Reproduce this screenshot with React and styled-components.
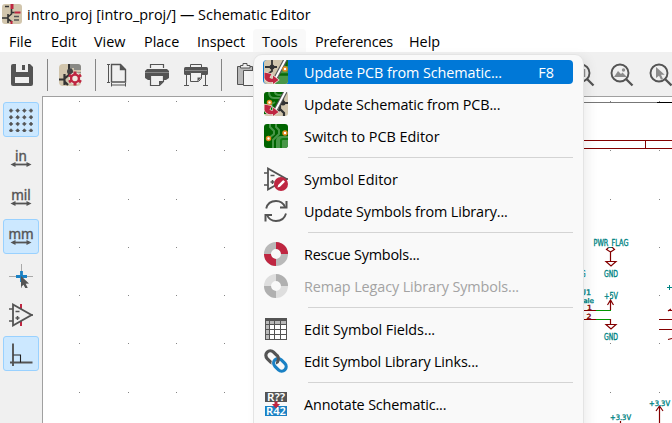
import React from 'react';
import styled, { createGlobalStyle } from 'styled-components';

const Global = createGlobalStyle`
  html, body { margin: 0; padding: 0; background: #fff; overflow: hidden; }
  * { box-sizing: border-box; }
  svg { display: block; flex: none; }
`;

const Window = styled.div`
  position: relative;
  width: 672px;
  height: 423px;
  overflow: hidden;
  display: flex;
  flex-direction: column;
  background: #fff;
  color: #000;
  font: 14.4px "Open Sans", "Noto Sans", sans-serif;
`;
const TitleBar = styled.header`
  height: 28px;
  display: flex;
  align-items: center;
  padding: 0 0 0 2px;
  gap: 5px;
  white-space: nowrap;
`;
const Title = styled.span`
  line-height: 28px;
  padding-top: 1px;
`;
const MenuBar = styled.nav`
  height: 24px;
  display: flex;
`;
const MenuName = styled.div`
  width: ${p => p.$w}px;
  height: 24px;
  line-height: 27px;
  padding-left: 9px;
  white-space: nowrap;
  letter-spacing: ${p => p.$ls || 0}px;
`;
const OpenMenuName = styled(MenuName)`
  margin-top: 1px;
  line-height: 25px;
  border-radius: 4px 4px 0 0;
  background: #f9f9f9;
`;
const Toolbar = styled.div`
  height: 44px;
  background: #f0f0f0;
  display: flex;
  align-items: center;
  padding: 2px 0 0 10px;
`;
const Tool = styled.div`
  width: 24px;
  height: 24px;
  flex: none;
  margin-right: ${p => p.$gap}px;
`;
const Divider = styled.div`
  width: 1px;
  height: 32px;
  flex: none;
  background: #858585;
  margin-right: ${p => p.$gap}px;
`;
const Body = styled.div`
  flex: 1;
  min-height: 0;
  display: flex;
`;
const Sidebar = styled.aside`
  width: 42px;
  background: #f0f0f0;
  display: flex;
  flex-direction: column;
  padding: 6px 0 0 3px;
  gap: 4px;
`;
const SideButton = styled.div`
  width: 36px;
  height: 35px;
  flex: none;
  display: flex;
  align-items: center;
  justify-content: center;
  border-radius: 3px;
  border: 1px solid ${p => (p.$on ? '#99d1ff' : 'transparent')};
  background: ${p => (p.$on ? '#cce8ff' : 'transparent')};
`;
const Canvas = styled.main`
  width: 630px;
  height: 327px;
  border-left: 1px solid #a0a0a0;
  border-top: 1px solid #a0a0a0;
  background: #fff;
`;
const Menu = styled.div`
  position: absolute;
  left: 253px;
  top: 54px;
  width: 331px;
  height: 390px;
  display: flex;
  flex-direction: column;
  padding: 1px 10px 0 9px;
  background: #f9f9f9;
  border: 1px solid #e4e4e4;
  border-radius: 9px;
  box-shadow: 4px 3px 12px rgba(0, 0, 0, 0.07);
`;
const Item = styled.div`
  height: 24px;
  flex: none;
  margin: 4px 0;
  display: flex;
  align-items: center;
  padding-left: 1px;
  border-radius: 4px;
  white-space: nowrap;
  background: ${p => (p.$on ? '#0078d7' : 'transparent')};
  color: ${p => (p.$on ? '#fff' : p.$off ? '#a3a3a3' : '#000')};
`;
const Label = styled.span`
  margin-left: 16px;
  flex: 1;
  line-height: 24px;
  padding-top: 1px;
  letter-spacing: ${p => p.$ls || 0}px;
`;
const Shortcut = styled.span`
  margin-right: 19px;
  padding-top: 1px;
  line-height: 24px;
`;
const Rule = styled.hr`
  width: 265px;
  height: 1px;
  flex: none;
  border: 0;
  margin: 5px 0 5px 45px;
  background: #d4d4d4;
`;

const G = '#545454';
const R = '#bf2641';

const OpenSvg = styled.svg`
  overflow: visible;
`;
const Icon = ({ size = 24, children }) => (
  <svg width={size} height={size} viewBox={`0 0 ${size} ${size}`} fill="none">{children}</svg>
);

const AppLogo = () => (
  <Icon size={20}>
    <rect width="20" height="20" rx="3" fill="#d2c6ad" />
    <path d="M10 0v5" stroke={R} strokeWidth="3" />
    <path d="M12.500 8.500h6" stroke={R} strokeWidth="2" />
    <path d="M3 2.500h4M0 14h6M9.500 5v5L6 13M6 10v9M6 15l4 3M9.500 8.500h3" stroke="#333" strokeWidth="1.600" />
    <path d="M12 12.500h5M12 16h5" stroke={G} strokeWidth="1.500" />
    <path d="M9.500 17v3" stroke={R} strokeWidth="2" />
  </Icon>
);
const Save = () => (
  <Icon>
    <path d="M1 3q0-2 2-2h17l3 3v17q0 2-2 2H3q-2 0-2-2z" fill={G} />
    <path d="M6 1h12v8H6zM5 14h14v6H5z" fill="#f0f0f0" />
    <path d="M12 2h3v5h-3z" fill={G} />
  </Icon>
);
const Gear = ({ x, y }) => (
  <g transform={`translate(${x} ${y})`}>
    <circle r="6" fill="#efeae0" />
    {[0, 60, 120].map(a => (
      <path key={a} transform={`rotate(${a})`} d="M0-7v14" stroke={R} strokeWidth="3" />
    ))}
    <circle r="3.900" fill="#efeae0" stroke={R} strokeWidth="2.400" />
  </g>
);
const ProjectGear = () => (
  <Icon>
    <rect x="1" y="1" width="22" height="22" rx="4" fill="#d2c6ad" />
    <path d="M10 1v5l5 3 8 1V4q0-3-3-3z" fill="#8a8a86" />
    <path d="M15 5v3h8" stroke="#d2c6ad" strokeWidth="2" />
    <path d="M11 1v6" stroke="#333" strokeWidth="2" />
    <circle cx="12" cy="8.500" r="3" fill="#444" />
    <path d="M1 16.500h6M6.500 11v11M6 16l6-5M6 18l4 4" stroke="#333" strokeWidth="2.200" />
    <Gear x={17} y={15.5} />
  </Icon>
);
const Page = () => (
  <Icon>
    <path d="M5.500 1.500h9l5 5v12.500h-14zM14.500 1.500v5h5" stroke={G} strokeWidth="1.400" />
    <path d="M14.500 1.500l5 5h-5z" fill={G} />
    <path d="M1 1.500h3M1 19.500h3M2.500 1.500v18M5.500 20v3.500M19.500 20v3.500M5.500 22h14" stroke={G} />
  </Icon>
);
const Printer = () => (
  <Icon>
    <path d="M5.500 5V1.500h13V5" stroke={G} strokeWidth="1.200" />
    <path d="M2 6h20l2 2v7l-3 2h-2v-5H5v5H3l-3-2V8z" fill={G} />
    <path d="M0 9.500h24" stroke="#888" strokeWidth="1" />
    <path d="M5.500 12.500h13v6l-4 4h-9z" fill="#f0f0f0" stroke={G} strokeWidth="1.200" />
    <path d="M18.500 18h-4.500v4.500z" fill={G} />
  </Icon>
);
const Plotter = () => (
  <Icon>
    <path d="M6.500 4V1.500h11V4" stroke={G} />
    <rect y="4" width="24" height="8" rx="1.500" fill={G} />
    <path d="M1 7.500h22" stroke="#888" />
    <path d="M2.500 12v11M21.500 12v11M0 22.500h5M19 22.500h5" stroke={G} />
    <path d="M6.500 9.500h11v6l-3 3h-8z" fill="#f0f0f0" stroke={G} />
    <path d="M17.500 14.500h-4v4z" fill={G} />
  </Icon>
);
const Clipboard = () => (
  <Icon>
    <path d="M1.500 3.500h15v18h-15z" fill="#b8b8b8" stroke={G} />
    <path d="M4.500 5V2.500h2.500V.500h4v2H14V5z" fill="#eee" stroke={G} />
    <path d="M7.500 7.500H20v15H7.500z" fill="#f3f3f3" stroke={G} />
  </Icon>
);
const Zoom = ({ kind }) => (
  <Icon>
    <circle cx="10" cy="10" r="8.500" stroke={G} strokeWidth="1.900" />
    <path d="M16 16l6.500 6.500" stroke={G} strokeWidth="2.300" />
    {kind === 'fit' && (
      <>
        <path d="M4 14l4-6 3 3 1.500-1.500L17 14z" fill="#8c8c8c" />
        <circle cx="13.500" cy="7" r="1.700" fill="#8c8c8c" />
      </>
    )}
    {kind === 'pick' && <path d="M7 4v11l3-2.300 2 4 2-.8-2-4.200h3.700z" fill="#8c8c8c" />}
    {kind === 'plain' && <path d="M13.500 6v8" stroke="#8c8c8c" strokeWidth="1.500" />}
  </Icon>
);

const GridDots = () => (
  <Icon>
    {[0, 1, 2, 3].flatMap(i => [0, 1, 2, 3].map(j => (
      <path key={`${i}${j}`} d={`M${2 + i * 6.67} ${0.7 + j * 6.67}l1.900 1.900-1.900 1.900-1.900-1.900z`} fill={G} stroke={G} strokeWidth=".6" />
    )))}
  </Icon>
);
const Unit = ({ children }) => (
  <OpenSvg width="24" height="24" viewBox="0 0 24 24">
    <text x="12" y="13.500" textAnchor="middle" fill={G} fontSize="13.500" fontFamily="Noto Sans" stroke={G} strokeWidth=".4">{children}</text>
    <path d="M4 17.500h16" stroke={G} strokeWidth="1.800" />
    <path d="M1.500 17.500l5-2.500v5zM22.500 17.500l-5-2.500v5z" fill={G} />
  </OpenSvg>
);
const Cross = () => (
  <Icon>
    <path d="M0 12.500h24M12.500 0v24" stroke="#a9a9a9" />
    <path d="M12.500 7v11M7 12.500h11" stroke="#1a81c4" strokeWidth="2.800" />
    <path d="M12 12v11l2.500-2.200 2.200 4 2-1-2-4 3.300-.4z" fill={G} />
  </Icon>
);
const OpAmp = ({ badge }) => (
  <Icon>
    {!badge && <path d="M12 1v22" stroke={R} strokeWidth="2" />}
    <path d="M4 1.500v21L22.500 12z" fill={badge ? '#f9f9f9' : '#f0f0f0'} stroke={G} strokeWidth="1.800" />
    <path d="M0 6h4M0 18h4M22 12h2M6.500 8.500h4M6.500 15h4M8.500 13v4" stroke={G} strokeWidth="1.500" />
    {badge && (
      <>
        <circle cx="17" cy="17" r="7" fill={R} />
        <path d="M13.500 20.500l.7-2.500 5-5 1.800 1.800-5 5z" fill="#fff" />
      </>
    )}
  </Icon>
);
const Angle = () => (
  <Icon>
    <path d="M4 1.500V24M1 20.500h22.500" stroke={G} strokeWidth="1.900" />
    <path d="M4.500 13h7v7.500" stroke="#222" strokeWidth="1.100" />
  </Icon>
);

const Via = ({ x, y }) => <circle cx={x} cy={y} r="2" fill="#fff" stroke="#e68a20" strokeWidth="1.500" />;
const Tile = ({ fill }) => <rect width="24" height="24" rx="3" fill={fill} />;
const RedArrow = () => (
  <path
    d="M.5 12.500L7.500 14 5.500 17.500Q6.500 19 9 18.500V15.500L14.500 20 9 24V22Q2 23 .5 18Z"
    fill={R}
    stroke="#e6e0d4"
    strokeWidth="1.400"
    paintOrder="stroke"
  />
);
const PcbFromSch = () => (
  <Icon>
    <Tile fill="#d2c6ad" />
    <path d="M22 0q2 0 2 2v19q0 3-3 3H11z" fill="#489648" />
    <path d="M15 14.500h9M22.500 0v6" stroke="#0a6a0a" strokeWidth="2.500" />
    <path d="M8 0v6M1 7h12M8 7v4l-4 3" stroke="#333" strokeWidth="1.800" />
    <circle cx="8" cy="7" r="2.500" fill="#333" />
    <path d="M21.500-.5L9.500 22" stroke="#555" strokeWidth="4.200" />
    <path d="M21.500-.5L9.500 22" stroke="#fff" strokeWidth="2" />
    <Via x={21} y={9} />
    <RedArrow />
  </Icon>
);
const SchFromPcb = () => (
  <Icon>
    <Tile fill="#d2c6ad" />
    <path d="M3 0h18L9 22H0V3q0-3 3-3z" fill="#006400" />
    <path d="M5 0q0 6 5 6h8M11 0q0 3 5 3h4M2 16l9-6" stroke="#489648" strokeWidth="2" />
    <path d="M19 3v6l-3 4v4l4 4v3M16 11h8M11 21l6-4" stroke="#333" strokeWidth="2.200" />
    <circle cx="19" cy="11" r="2.500" fill="#333" />
    <path d="M21.500-.5L9.500 22" stroke="#555" strokeWidth="4.200" />
    <path d="M21.500-.5L9.500 22" stroke="#fff" strokeWidth="2" />
    <Via x={5.5} y={10.5} />
    <RedArrow />
  </Icon>
);
const Pcb = () => (
  <Icon>
    <Tile fill="#006400" />
    <path d="M12 24v-7q0-5 5-5h7v9q0 3-3 3z" fill="#489648" />
    <path d="M6 0v3l4 4v3l-5 4M12 0v3l3 3v4l-6 6v8" stroke="#489648" strokeWidth="2" />
    <path d="M24 15h-5q-2 0-2 2v7" stroke="#107a10" strokeWidth="2" />
    <Via x={4.5} y={14.5} />
    <Via x={21} y={9} />
  </Icon>
);
const Refresh = () => (
  <Icon>
    <path d="M2.200 9.500Q4 2 12 2q6.500 0 9 6M22 14.500q-2 7.500-10 7.500-6.500 0-9-6" stroke={G} strokeWidth="1.900" />
    <path d="M22.500 2v6.500H16M1.500 22.500V16H8" stroke={G} strokeWidth="2" />
  </Icon>
);
const Ring = ({ a, b }) => (
  <Icon>
    <circle cx="12" cy="12" r="8.500" stroke={b} strokeWidth="7" />
    <path d="M12 3.500a8.500 8.500 0 0 1 8.500 8.500M12 20.500a8.500 8.500 0 0 1-8.500-8.500" stroke={a} strokeWidth="7" />
  </Icon>
);
const Table = () => (
  <Icon>
    <path d="M1 1h22v22H1z" fill="#fff" />
    <path d="M1 4h22v3H1zM1 4h4v19H1z" fill="#b9b9b9" />
    <path d="M1 1h22v3H1z" fill={G} />
    <path d="M1.500 1v22M5.500 4v19M10.500 4v19M16.500 4v19M22.500 1v22M1 7.500h22M1 12.500h22M1 17.500h22M1 22.500h22" stroke={G} />
  </Icon>
);
const Chain = () => (
  <Icon>
    <g transform="rotate(45 12 12)" strokeWidth="3.200">
      <rect x="-.5" y="7.500" width="14" height="9" rx="4.500" stroke={G} />
      <rect x="10.500" y="7.500" width="14" height="9" rx="4.500" stroke="#f9f9f9" strokeWidth="4.600" />
      <rect x="10.500" y="7.500" width="14" height="9" rx="4.500" stroke="#1a81c4" />
      <path d="M9 7.500a4.500 4.500 0 0 1 4.500 4.500" stroke={G} />
    </g>
  </Icon>
);
const Annotate = () => (
  <OpenSvg width="24" height="24" viewBox="0 0 24 24">
    <path d="M1 0h22v10H1z" fill={G} />
    <path d="M1 14h22v10H1z" fill="#1a81c4" />
    <g fill="#fff" fontFamily="Noto Sans" fontSize="10.500" fontWeight="600">
      <text x="3" y="9" textLength="18" lengthAdjust="spacingAndGlyphs">R??</text>
      <text x="2" y="23" textLength="20" lengthAdjust="spacingAndGlyphs">R42</text>
    </g>
    <path d="M10.500 9.500h3v2.500H16L12 16.500 8 12h2.500z" fill={R} />
  </OpenSvg>
);

const dotX = [79, 128, 176, 224, 610, 659];
const dotY = [101, 150, 199, 247, 295, 343, 392];
const Net = ({ x, y, w, children, size = 8 }) => (
  <text x={x} y={y} fontSize={size} textLength={w} lengthAdjust="spacingAndGlyphs">{children}</text>
);
const Schematic = () => (
  <svg width="629" height="326" viewBox="43 97 629 326" fill="none">
    <g fill="#858585">
      {dotX.flatMap(x => dotY.map(y => <rect key={`${x}-${y}`} x={x} y={y} width="1" height="1" />))}
    </g>
    <g shapeRendering="crispEdges">
      <path d="M580 102.500h77" stroke="#777" />
      <path d="M657 102.500h15" stroke="#000" />
      <path d="M580 140.500h92M580 148.500h92M645.500 140v8M580 310.500h16M580 319.500h16M659 319.500h13M659 329.500h13M668 310.500h4" stroke="#840000" />
      <path d="M596 310.500h15M596 319.500h15" stroke="#009600" />
    </g>
    <g stroke="#840000" strokeWidth="1.200">
      <path d="M610.500 252v9M606 261.500h10l-5 4.500zM610.500 252l-4-2.500 2-2h4l2 2zM610.500 310v-10M607.500 305l3-5 3 5M610.500 319v5M606 324.500h10l-5 4.500zM659.500 423v-17M656 411l3.500-5 3.500 5M620.500 423v-2" />
      <path d="M668 339.500l4-1M668 311l3-2" />
    </g>
    <g fill="#008484" stroke="#008484" strokeWidth=".35" fontFamily="DejaVu Sans">
      <Net x={593.5} y={246} w={35}>PWR_FLAG</Net>
      <Net x={604} y={277} w={14}>GND</Net>
      <Net x={604} y={299} w={14}>+5V</Net>
      <Net x={604} y={340} w={14}>GND</Net>
      <Net x={581} y={277} w={4.5}>G</Net>
      <Net x={580} y={295} w={11} size={7.5}>U1</Net>
      <Net x={577} y={303} w={17} size={6.5}>Male</Net>
      <Net x={649} y={406} w={21} size={7.5}>+3.3V</Net>
      <Net x={610} y={420} w={21} size={7.5}>+3.3V</Net>
      <path d="M667 287.500h5M669.500 285v5" strokeWidth="1" />
    </g>
    <g fill="#840000" stroke="#840000" strokeWidth=".35" fontFamily="DejaVu Sans">
      <Net x={587} y={310} w={5} size={7}>1</Net>
      <Net x={586.5} y={319} w={5} size={7}>2</Net>
    </g>
  </svg>
);

const menuNames = [
  ['File', 42, 0], ['Edit', 43, 0], ['View', 50, 0], ['Place', 53, 0], ['Inspect', 65, -0.1],
  ['Tools', 53, 0], ['Preferences', 94, -0.2], ['Help', 50, 0],
];
const items = [
  ['Update PCB from Schematic...', PcbFromSch, { on: true, key: 'F8', ls: -0.08 }],
  ['Update Schematic from PCB...', SchFromPcb, { ls: -0.14 }],
  ['Switch to PCB Editor', Pcb],
  null,
  ['Symbol Editor', () => <OpAmp badge />, { ls: 0.05 }],
  ['Update Symbols from Library...', Refresh, { ls: -0.14 }],
  null,
  ['Rescue Symbols...', () => <Ring a={R} b="#b9b9b9" />, { ls: -0.2 }],
  ['Remap Legacy Library Symbols...', () => <Ring a="#b0b0b0" b="#dedede" />, { off: true, ls: -0.11 }],
  null,
  ['Edit Symbol Fields...', Table, { ls: -0.06 }],
  ['Edit Symbol Library Links...', Chain, { ls: -0.16 }],
  null,
  ['Annotate Schematic...', Annotate, { ls: -0.15 }],
];

export default function App() {
  return (
    <Window>
      <Global />
      <TitleBar>
        <AppLogo />
        <Title>intro_proj [intro_proj/] — Schematic Editor</Title>
      </TitleBar>
      <MenuBar>
        {menuNames.map(([name, w, ls]) => {
          const Name = name === 'Tools' ? OpenMenuName : MenuName;
          return <Name key={name} $w={w} $ls={ls}>{name}</Name>;
        })}
      </MenuBar>
      <Toolbar>
        <Tool $gap={13}><Save /></Tool>
        <Divider $gap={10} />
        <Tool $gap={13}><ProjectGear /></Tool>
        <Divider $gap={10} />
        <Tool $gap={15}><Page /></Tool>
        <Tool $gap={15}><Printer /></Tool>
        <Tool $gap={13}><Plotter /></Tool>
        <Divider $gap={14} />
        <Tool $gap={311}><Clipboard /></Tool>
        <Tool $gap={15}><Zoom kind="plain" /></Tool>
        <Tool $gap={15}><Zoom kind="fit" /></Tool>
        <Tool $gap={0}><Zoom kind="pick" /></Tool>
      </Toolbar>
      <Body>
        <Sidebar>
          <SideButton $on><GridDots /></SideButton>
          <SideButton><Unit>in</Unit></SideButton>
          <SideButton><Unit>mil</Unit></SideButton>
          <SideButton $on><Unit>mm</Unit></SideButton>
          <SideButton><Cross /></SideButton>
          <SideButton><OpAmp /></SideButton>
          <SideButton $on><Angle /></SideButton>
        </Sidebar>
        <Canvas><Schematic /></Canvas>
      </Body>
      <Menu>
        {items.map((item, i) => {
          if (!item) return <Rule key={i} />;
          const [label, Glyph, o = {}] = item;
          return (
            <Item key={label} $on={o.on} $off={o.off}>
              <Glyph />
              <Label $ls={o.ls}>{label}</Label>
              {o.key && <Shortcut>{o.key}</Shortcut>}
            </Item>
          );
        })}
      </Menu>
    </Window>
  );
}
